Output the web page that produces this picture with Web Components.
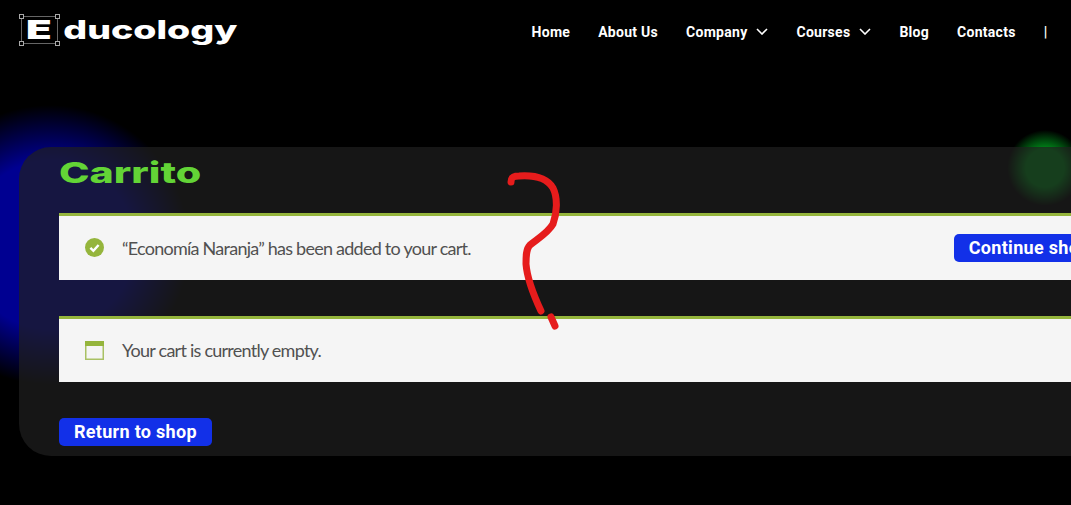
<!DOCTYPE html>
<html lang="en">
<head>
<meta charset="utf-8">
<title>Carrito – Educology</title>
<style>
  html, body { margin: 0; height: 505px; overflow: hidden; background: #000; }
</style>
</head>
<body>
<site-header>
  <nav-link>Home</nav-link>
  <nav-link>About Us</nav-link>
  <nav-link data-menu>Company</nav-link>
  <nav-link data-menu>Courses</nav-link>
  <nav-link>Blog</nav-link>
  <nav-link>Contacts</nav-link>
  <nav-link>|</nav-link>
</site-header>
<glow-spot data-color="0,0,145" style="--x:-90px;--y:105px;--size:280px;--solid:60%"></glow-spot>
<glow-spot data-color="0,135,25" style="--x:1007px;--y:130px;--size:76px;--solid:50%"></glow-spot>
<cart-panel data-title="Carrito">
  <cart-notice data-icon="check" data-action="Continue shopping">“Economía Naranja” has been added to your cart.</cart-notice>
  <cart-notice data-icon="window">Your cart is currently empty.</cart-notice>
  <blue-button>Return to shop</blue-button>
</cart-panel>
<pen-scribble></pen-scribble>

<script>
class SiteHeader extends HTMLElement
{
  constructor()
  {
    super();
    this.attachShadow({mode: "open"});
    this.shadowRoot.innerHTML = `
      <style>
        :host { display: flex; justify-content: space-between; height: 147px; }
        .logo { position: relative; margin: 15px 0 0 26px; height: 30px; }
        .word {
          display: block;
          font: 800 26px/30px Inter, sans-serif;
          color: #fff;
          white-space: nowrap;
          transform: scaleX(1.44);
          transform-origin: left center;
        }
        .word b {
          display: inline-block;
          font-weight: 900;
          margin-right: 10px;
          transform: scaleX(1.12);
          transform-origin: left center;
        }
        .frame {
          position: absolute;
          left: -5px;
          top: 1px;
          width: 35px;
          height: 26px;
          border: 1px solid #666;
        }
        .frame i {
          position: absolute;
          width: 3px;
          height: 3px;
          border: 1px solid #aaa;
          background: #000;
        }
        nav { display: flex; gap: 28px; margin: 24px 23.5px 0 0; height: 16px; }
      </style>
      <div class="logo">
        <span class="word"><b>E</b>ducology</span>
        <div class="frame">
          <i style="left:-3px;top:-3px"></i><i style="right:-3px;top:-3px"></i>
          <i style="left:-3px;bottom:-3px"></i><i style="right:-3px;bottom:-3px"></i>
        </div>
      </div>
      <nav><slot></slot></nav>
    `;
  }
}

class NavLink extends HTMLElement
{
  constructor()
  {
    super();
    this.attachShadow({mode: "open"});
    const chevron = this.hasAttribute("data-menu")
      ? `<svg width="12" height="7" viewBox="0 0 12 7"><path d="M1 1l5 5 5-5" fill="none" stroke="#fff" stroke-width="1.6"/></svg>`
      : "";
    this.shadowRoot.innerHTML = `
      <style>
        :host {
          display: flex;
          align-items: center;
          gap: 9px;
          font: 700 14px/16px Roboto, sans-serif;
          letter-spacing: .28px;
          color: #fff;
          white-space: nowrap;
        }
        svg { margin-top: -2px; }
      </style>
      <slot></slot>${chevron}
    `;
  }
}

class GlowSpot extends HTMLElement
{
  constructor()
  {
    super();
    this.attachShadow({mode: "open"});
    const color = this.getAttribute("data-color");
    this.shadowRoot.innerHTML = `
      <style>
        :host {
          position: absolute;
          left: var(--x);
          top: var(--y);
          width: var(--size);
          height: var(--size);
          border-radius: 50%;
          background: radial-gradient(circle closest-side, rgb(${color}) var(--solid), rgba(${color},0) 100%);
        }
      </style>
    `;
  }
}

class CartPanel extends HTMLElement
{
  constructor()
  {
    super();
    this.attachShadow({mode: "open"});
    const title = this.getAttribute("data-title") ?? "";
    this.shadowRoot.innerHTML = `
      <style>
        :host {
          display: block;
          position: relative;
          box-sizing: border-box;
          width: 1165px;
          height: 309px;
          margin-left: 19px;
          padding: 0 43px 0 40px;
          border-radius: 32px;
          background: rgba(32,32,32,.7);
        }
        h1 {
          margin: 0;
          height: 66px;
          padding-top: 9px;
          box-sizing: border-box;
          font: 800 29px/34px Inter, sans-serif;
          color: #63d436;
          transform: scaleX(1.42);
          transform-origin: left center;
        }
        .body { display: flex; flex-direction: column; gap: 36px; align-items: stretch; }
      </style>
      <h1>${title}</h1>
      <div class="body"><slot></slot></div>
    `;
  }
}

class CartNotice extends HTMLElement
{
  constructor()
  {
    super();
    this.attachShadow({mode: "open"});
    const action = this.getAttribute("data-action");
    this.shadowRoot.innerHTML = `
      <style>
        :host {
          display: flex;
          align-items: center;
          box-sizing: border-box;
          height: 66.5px;
          padding: 0 0 0 26px;
          border-top: 3px solid #95b53c;
          background: #f5f5f5;
          font: 400 18px/24px Lato, sans-serif;
          letter-spacing: -.75px;
          color: #515151;
        }
        svg { flex: none; margin-right: 18px; }
        .text { flex: 1; }
        blue-button { align-self: center; }
      </style>
      ${this.icon()}
      <span class="text"><slot></slot></span>
      ${action ? `<blue-button>${action}</blue-button>` : ""}
    `;
  }

  icon()
  {
    if (this.getAttribute("data-icon") === "check")
    {
      return `<svg width="19" height="19" viewBox="0 0 19 19">
        <circle cx="9.5" cy="9.5" r="9.5" fill="#95b53c"/>
        <path d="M5.4 9.8l3 3 5.2-5.8" fill="none" stroke="#fff" stroke-width="2.4"/>
      </svg>`;
    }
    return `<svg width="19" height="19" viewBox="0 0 19 19">
      <rect x=".75" y=".75" width="17.5" height="17.5" fill="none" stroke="#a9c164" stroke-width="1.5"/>
      <rect width="19" height="5" fill="#95b53c"/>
    </svg>`;
  }
}

class BlueButton extends HTMLElement
{
  constructor()
  {
    super();
    this.attachShadow({mode: "open"});
    this.shadowRoot.innerHTML = `
      <style>
        :host {
          display: block;
          align-self: flex-start;
          flex: none;
          box-sizing: border-box;
          height: 28px;
          padding: 0 15px;
          border-radius: 5px;
          background: #1230e8;
          font: 700 18px/27px Roboto, sans-serif;
          letter-spacing: .3px;
          color: #fff;
          white-space: nowrap;
        }
      </style>
      <slot></slot>
    `;
  }
}

class PenScribble extends HTMLElement
{
  constructor()
  {
    super();
    this.attachShadow({mode: "open"});
    this.shadowRoot.innerHTML = `
      <style>
        :host { position: absolute; left: 500px; top: 165px; width: 70px; height: 170px; }
        svg { display: block; }
        path { fill: none; stroke: #e61c1c; stroke-width: 7; stroke-linecap: round; stroke-linejoin: round; }
      </style>
      <svg width="70" height="170" viewBox="500 165 70 170">
        <path d="M511 182C511 177 514 176 519 176C534 175 547 178 553 188C558 198 557 213 553 224C548 233 537 239 530 245C526 249 526 256 526 264C527 277 534 296 541 311"/>
        <path d="M551 317L555 326"/>
      </svg>
    `;
  }
}

customElements.define("site-header", SiteHeader);
customElements.define("nav-link", NavLink);
customElements.define("glow-spot", GlowSpot);
customElements.define("cart-panel", CartPanel);
customElements.define("cart-notice", CartNotice);
customElements.define("blue-button", BlueButton);
customElements.define("pen-scribble", PenScribble);
</script>
</body>
</html>
